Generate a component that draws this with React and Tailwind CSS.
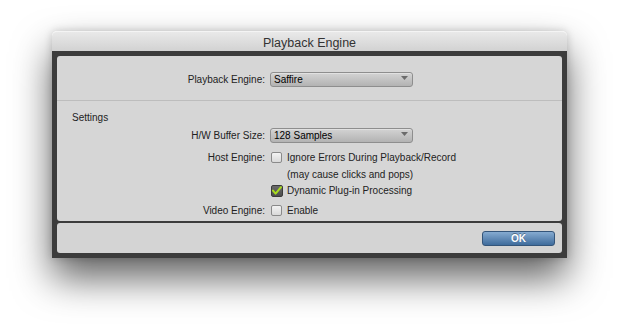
import React from "react";

const Arrow = () => (
  <svg width="7" height="4" viewBox="0 0 7 4" className="mt-[3px]">
    <path d="M0 0h7L3.5 4z" fill="#6b6b6b" />
  </svg>
);

const Popup = ({ value }) => (
  <div className="flex h-[15px] w-[143px] justify-between rounded-[3px] border border-[#8e8e8e] bg-gradient-to-b from-[#d3d3d3] to-[#b3b3b3] pl-[3px] pr-[4px] shadow-[inset_0_1px_0_rgba(255,255,255,0.35)]">
    <span className="text-[10px] leading-[13px] text-black">{value}</span>
    <Arrow />
  </div>
);

const Checkbox = ({ checked }) =>
  checked ? (
    <div className="flex h-[12px] w-[12px] items-center justify-center rounded-[2px] border border-[#3b3b3b] bg-gradient-to-b from-[#6a6a6a] to-[#4e4e4e]">
      <svg width="10" height="9" viewBox="0 0 10 9">
        <path d="M1 4.6l2.6 3L9 1.2" fill="none" stroke="#a8dc1e" strokeWidth="2" strokeLinecap="round" strokeLinejoin="round" />
      </svg>
    </div>
  ) : (
    <div className="h-[11px] w-[11px] rounded-[2px] border border-[#8a8a8a] bg-gradient-to-b from-[#f3f3f3] to-[#d9d9d9]" />
  );

const Row = ({ label, children, className = "" }) => (
  <div className={"flex items-center " + className}>
    <div className="w-[208px] text-right">{label}</div>
    <div className="ml-[5px] flex items-center">{children}</div>
  </div>
);

const CheckRow = ({ label, checked, text, className = "" }) => (
  <Row label={label} className={"h-[17px] " + className}>
    <div className="ml-[1px] flex w-[12px] items-center">
      <Checkbox checked={checked} />
    </div>
    <span className="ml-[4px]">{text}</span>
  </Row>
);

export default function App() {
  return (
    <div className="h-[331px] w-[620px] overflow-hidden bg-white pl-[52px] pt-[31px] font-['Liberation_Sans',Arial,sans-serif] text-[10px] text-[#222]">
      <div className="w-[515px] rounded-t-[5px] shadow-[0_20px_38px_rgba(0,0,0,0.62),0_0_8px_rgba(0,0,0,0.18)]">
        {/* title bar */}
        <div className="flex h-[20px] items-center justify-center rounded-t-[5px] border-t border-[#f4f4f4] bg-gradient-to-b from-[#e9e9e9] to-[#d2d2d2] pt-[3px] text-[12.5px] text-[#333]">
          Playback Engine
        </div>

        <div className="bg-[#3c3c3c] p-[5px]">
          {/* main panel */}
          <div className="h-[165px] rounded-[3px] bg-[#d6d6d6]">
            <div className="h-[44px] pt-[16px]">
              <Row label="Playback Engine:">
                <Popup value="Saffire" />
              </Row>
            </div>
            <div className="h-px bg-[#bdbdbd]" />

            <div className="pl-[15px] pt-[11px] leading-[12px]">Settings</div>
            <Row label="H/W Buffer Size:" className="mt-[4px]">
              <Popup value="128 Samples" />
            </Row>
            <CheckRow label="Host Engine:" text="Ignore Errors During Playback/Record" className="mt-[6px]" />
            <Row label="" className="h-[16px]">
              <span className="ml-[17px]">(may cause clicks and pops)</span>
            </Row>
            <CheckRow label="" checked text="Dynamic Plug-in Processing" />
            <CheckRow label="Video Engine:" text="Enable" className="mt-[3px]" />
          </div>

          {/* bottom bar */}
          <div className="mt-[2px] flex h-[30px] items-center justify-end rounded-[3px] bg-[#d4d4d4] pr-[7px]">
            <button className="h-[15px] w-[73px] rounded-[3px] border border-[#34557a] bg-gradient-to-b from-[#86abd1] to-[#3f6c9c] text-[10px] font-bold leading-[13px] text-white [text-shadow:0_-1px_0_rgba(0,0,0,0.35)]">
              OK
            </button>
          </div>
        </div>
      </div>
    </div>
  );
}
